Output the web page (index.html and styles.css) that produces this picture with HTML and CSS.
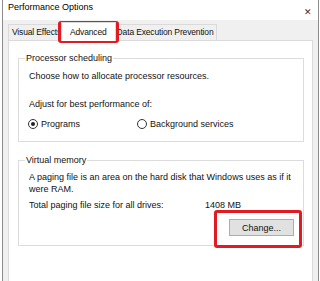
FILE: index.html
```html
<!DOCTYPE html>
<html lang="en">
<head>
    <meta charset="UTF-8">
    <meta name="viewport" content="width=device-width, initial-scale=1.0">
    <title>Performance Options</title>
    <link rel="stylesheet" href="styles.css">
</head>
<body>
    <div class="window">
        <div class="titlebar">
            <span class="title">Performance Options</span>
            <span class="close">&#x2715;</span>
        </div>

        <div class="content">
            <div class="tabs">
                <div class="tab tab-first">Visual Effects</div>
                <div class="tab active">Advanced</div>
                <div class="tab">Data Execution Prevention</div>
            </div>

            <div class="panel">
                <fieldset class="group">
                    <legend>Processor scheduling</legend>
                    <p class="line">Choose how to allocate processor resources.</p>
                    <p class="line adjust">Adjust for best performance of:</p>
                    <div class="radios">
                        <label class="radio radio-programs"><span class="dot checked"></span>Programs</label>
                        <label class="radio"><span class="dot"></span>Background services</label>
                    </div>
                </fieldset>

                <fieldset class="group group-vm">
                    <legend>Virtual memory</legend>
                    <p class="line">A paging file is an area on the hard disk that Windows uses as if it were RAM.</p>
                    <div class="line total">
                        <span class="total-label">Total paging file size for all drives:</span>
                        <span>1408 MB</span>
                    </div>
                    <div class="actions">
                        <button>Change...</button>
                    </div>
                </fieldset>
            </div>
        </div>

        <!-- highlight marks -->
        <div class="mark mark-tab"></div>
        <div class="mark mark-button"></div>
    </div>
</body>
</html>
```

FILE: styles.css
```css
body {
    margin: 0;
    background: #ffffff;
    font-family: "Liberation Sans", Arial, sans-serif;
    font-size: 9px;
    color: #111;
    overflow: hidden;
}
.window {
    position: relative;
    margin-left: 2px;
    width: 315px;
    height: 281px;
    border-left: 1px solid #8c8c8c;
    border-right: 1px solid #8c8c8c;
    background: #f0f0f0;
}
.titlebar {
    height: 20px;
    background: #ffffff;
    display: flex;
    justify-content: space-between;
    padding: 0 6px 0 5px;
}
.title {
    font-size: 9px;
    line-height: 15px;
    color: #000;
}
.close {
    font-size: 9px;
    line-height: 9px;
    margin-top: 8px;
    color: #333;
}
.content {
    padding: 2px 5px 0;
}
.tabs {
    display: flex;
    align-items: flex-end;
    height: 18px;
}
.tab {
    box-sizing: border-box;
    height: 16px;
    line-height: 14px;
    padding: 0 2px;
    border: 1px solid #dadada;
    border-bottom: none;
    white-space: nowrap;
    overflow: hidden;
    background: #f0f0f0;
    font-size: 8.5px;
    letter-spacing: -0.15px;
}
.tab-first {
    width: 55px;
    padding-left: 3px;
}
.tab.active {
    position: relative;
    z-index: 1;
    height: 19px;
    margin: 0 -2px -1px;
    padding: 0 8px;
    background: #ffffff;
    line-height: 18px;
}
.panel {
    height: 250px;
    background: #ffffff;
    border: 1px solid #dadada;
    padding: 0 8px 0 9px;
}
.group {
    margin: 11px 0 0;
    padding: 6px 9px 11px 10px;
    border: 1px solid #dcdcdc;
    min-width: 0;
}
.group legend {
    margin-left: -4px;
    padding: 0 1px;
    line-height: 12px;
}
.group-vm {
    margin-top: 12px;
    padding-top: 5px;
    padding-bottom: 9px;
}
.line {
    margin: 0;
    line-height: 12px;
}
.adjust {
    margin-top: 16px;
}
.radios {
    display: flex;
    margin-top: 8px;
    line-height: 12px;
    margin-left: -1px;
}
.radio {
    display: flex;
    align-items: center;
}
.radio-programs {
    width: 109px;
}
.dot {
    box-sizing: border-box;
    width: 10px;
    height: 10px;
    margin-right: 3px;
    border: 1px solid #333;
    border-radius: 50%;
    display: flex;
    align-items: center;
    justify-content: center;
}
.dot.checked::after {
    content: "";
    width: 4px;
    height: 4px;
    border-radius: 50%;
    background: #222;
}
.total {
    display: flex;
    margin-top: 4px;
}
.total-label {
    width: 176px;
}
.actions {
    display: flex;
    justify-content: flex-end;
    margin-top: 8px;
}
button {
    box-sizing: border-box;
    width: 65px;
    height: 17px;
    padding: 0;
    font-family: inherit;
    font-size: 9px;
    color: #111;
    background: #e1e1e1;
    border: 1px solid #adadad;
    border-radius: 0;
}
.mark {
    position: absolute;
    box-sizing: border-box;
    border: 3px solid #e11b22;
    border-radius: 3px;
}
.mark-tab {
    left: 55px;
    top: 21px;
    width: 61px;
    height: 22px;
}
.mark-button {
    left: 211px;
    top: 210px;
    width: 88px;
    height: 38px;
}
```
